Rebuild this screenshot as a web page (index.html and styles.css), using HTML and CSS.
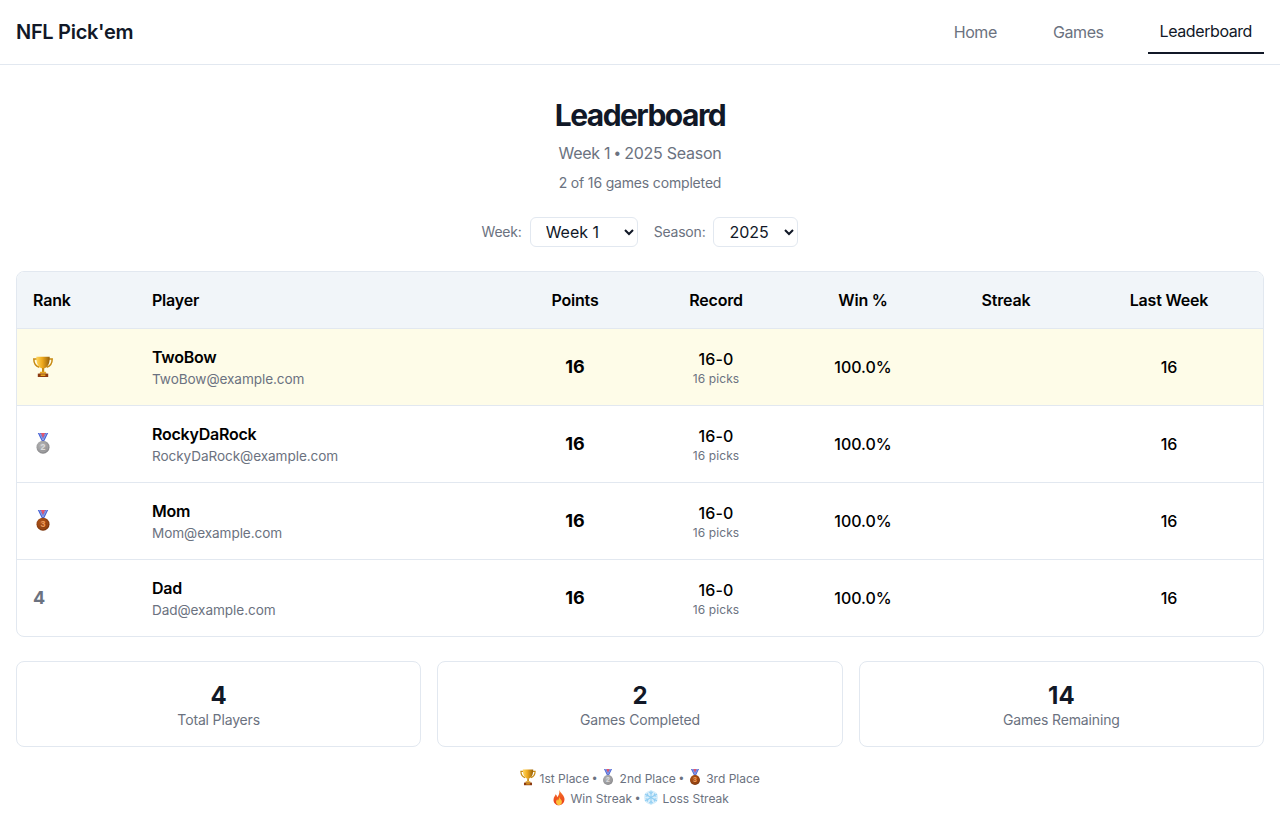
FILE: index.html
```html
<!DOCTYPE html>
<html lang="en">
<head>
<meta charset="utf-8">
<title>NFL Pick'em</title>
<link rel="stylesheet" href="styles.css">
</head>
<body>
<svg class="sprite" aria-hidden="true">
  <defs>
    <linearGradient id="gold" x1="0" x2="1" y1="0" y2="0">
      <stop offset="0" stop-color="#ffd75e"/><stop offset=".45" stop-color="#eea91c"/><stop offset="1" stop-color="#96600a"/>
    </linearGradient>
    <radialGradient id="silver" cx=".4" cy=".35" r=".75">
      <stop offset="0" stop-color="#bdbdbd"/><stop offset="1" stop-color="#7f7f82"/>
    </radialGradient>
    <radialGradient id="bronze" cx=".4" cy=".35" r=".75">
      <stop offset="0" stop-color="#b9591c"/><stop offset="1" stop-color="#73300a"/>
    </radialGradient>
    <linearGradient id="flame" x1="0" x2="0" y1="0" y2="1">
      <stop offset="0" stop-color="#f6792a"/><stop offset="1" stop-color="#e8361a"/>
    </linearGradient>
  </defs>
  <symbol id="i-trophy" viewBox="0 0 20 22">
    <path d="M4 3H.8c0 4.400 2 7.200 5.500 8.200M16 3h3.200c0 4.400-2 7.200-5.500 8.200" fill="none" stroke="#c88a12" stroke-width="1.500"/>
    <path d="M3.300 .8h13.400c0 5.600-1 9.800-5.100 11.400H8.400C4.300 10.600 3.300 6.400 3.300 .8z" fill="url(#gold)"/>
    <rect x="9" y="12" width="2.200" height="4" fill="#c88a12"/>
    <path d="M7.200 15.800h5.600l.7 2H6.500z" fill="#e5a51f"/>
    <rect x="4.800" y="17.600" width="10.400" height="3.400" fill="#8c3a10"/>
    <rect x="7.600" y="18.400" width="4.800" height="1.600" fill="#e5a51f"/>
  </symbol>
  <symbol id="i-ribbon" viewBox="0 0 20 22">
    <path d="M7.800 1h4.400L10 7z" fill="#e2566c"/>
    <path d="M4.800 1h3L11 8.600l-2 1z" fill="#4560d4"/>
    <path d="M15.200 1h-3L9 8.600l2 1z" fill="#4560d4"/>
    <path d="M6.500 1l3.500 7M13.500 1L10 8" stroke="#eef0fb" stroke-width=".5"/>
  </symbol>
  <symbol id="i-fire" viewBox="0 0 20 22">
    <path d="M10.500 1c.8 4 5.600 6.400 6.500 11 .8 5.200-3 9-7 9s-7.800-3.200-7-8.200c.4-2.500 2-3.600 2.600-6 1.300 1 1.900 2.400 1.900 4C9.500 9.300 11 5.200 10.500 1z" fill="url(#flame)"/>
    <path d="M10.200 10c.4 2.400 3.600 3.700 3.600 6.600 0 2.600-1.800 4.400-3.800 4.400s-3.800-1.700-3.800-4.200c0-1.400.8-2.300 1.400-3.400.6.5.9 1.100 1 1.900.8-1.300 1.500-3.300 1.600-5.300z" fill="#fdc13a"/>
  </symbol>
  <symbol id="i-snow" viewBox="0 0 20 22">
    <circle cx="10" cy="11" r="9" fill="#d8eefb"/>
    <g fill="none" stroke="#8fcdf2" stroke-width="1.300">
      <path d="M10 2v18M2.200 6.500l15.600 9M2.200 15.500l15.600-9"/>
      <path d="M7.800 3.600L10 5.800l2.200-2.200M7.800 18.400L10 16.200l2.200 2.200M3 9.400l3-.8-.8-3M17 12.600l-3 .8.800 3M3 12.600l3 .8-.8 3M17 9.400l-3-.8.800-3"/>
    </g>
  </symbol>
</svg>
<nav class="topbar">
  <div class="brand">NFL Pick'em</div>
  <div class="nav-links">
    <a class="nav-link">Home</a>
    <a class="nav-link">Games</a>
    <a class="nav-link active">Leaderboard</a>
  </div>
</nav>
<main class="page">
  <header class="head">
    <h1 class="title">Leaderboard</h1>
    <p class="subtitle">Week 1 <span class="sep">•</span> 2025 Season</p>
    <p class="progress">2 of 16 games completed</p>
  </header>
  <div class="filters">
    <label class="filter-label">Week:</label>
    <select class="select select-week"><option>Week 1</option></select>
    <label class="filter-label season-label">Season:</label>
    <select class="select select-season"><option>2025</option></select>
  </div>
  <div class="table-card">
    <table class="board">
      <colgroup>
        <col class="c-rank"><col class="c-player"><col class="c-points"><col class="c-record"><col class="c-win"><col class="c-streak"><col class="c-last">
      </colgroup>
      <thead>
        <tr><th class="left">Rank</th><th class="left">Player</th><th>Points</th><th>Record</th><th>Win %</th><th>Streak</th><th>Last Week</th></tr>
      </thead>
      <tbody>
        <tr class="first">
          <td class="rank"><svg class="rank-icon"><use href="#i-trophy"/></svg></td>
          <td class="player"><div class="name">TwoBow</div><div class="email">TwoBow@example.com</div></td>
          <td class="points">16</td>
          <td class="record"><div class="rec">16-0</div><div class="picks">16 picks</div></td>
          <td class="num">100.0%</td><td class="num"></td><td class="num">16</td>
        </tr>
        <tr>
          <td class="rank">
            <svg class="rank-icon" viewBox="0 1 20 22"><use href="#i-ribbon" width="20" height="22"/><circle cx="10" cy="15.200" r="6.500" fill="url(#silver)"/><circle cx="10" cy="15.200" r="4.600" class="ring-silver"/><text x="10" y="18.400" class="medal-digit silver-digit">2</text></svg>
          </td>
          <td class="player"><div class="name">RockyDaRock</div><div class="email">RockyDaRock@example.com</div></td>
          <td class="points">16</td>
          <td class="record"><div class="rec">16-0</div><div class="picks">16 picks</div></td>
          <td class="num">100.0%</td><td class="num"></td><td class="num">16</td>
        </tr>
        <tr>
          <td class="rank">
            <svg class="rank-icon" viewBox="0 1 20 22"><use href="#i-ribbon" width="20" height="22"/><circle cx="10" cy="15.200" r="6.500" fill="url(#bronze)"/><circle cx="10" cy="15.200" r="4.600" class="ring-bronze"/><text x="10" y="18.400" class="medal-digit bronze-digit">3</text></svg>
          </td>
          <td class="player"><div class="name">Mom</div><div class="email">Mom@example.com</div></td>
          <td class="points">16</td>
          <td class="record"><div class="rec">16-0</div><div class="picks">16 picks</div></td>
          <td class="num">100.0%</td><td class="num"></td><td class="num">16</td>
        </tr>
        <tr>
          <td class="rank">4</td>
          <td class="player"><div class="name">Dad</div><div class="email">Dad@example.com</div></td>
          <td class="points">16</td>
          <td class="record"><div class="rec">16-0</div><div class="picks">16 picks</div></td>
          <td class="num">100.0%</td><td class="num"></td><td class="num">16</td>
        </tr>
      </tbody>
    </table>
  </div>
  <section class="stats">
    <div class="stat"><div class="stat-value">4</div><div class="stat-label">Total Players</div></div>
    <div class="stat"><div class="stat-value">2</div><div class="stat-label">Games Completed</div></div>
    <div class="stat"><div class="stat-value">14</div><div class="stat-label">Games Remaining</div></div>
  </section>
  <footer class="legend">
    <p><svg class="legend-icon"><use href="#i-trophy"/></svg> 1st Place <span class="sep">•</span> <svg class="legend-icon" viewBox="0 1 20 22"><use href="#i-ribbon" width="20" height="22"/><circle cx="10" cy="15.200" r="6.500" fill="url(#silver)"/><circle cx="10" cy="15.200" r="4.600" class="ring-silver"/><text x="10" y="18.400" class="medal-digit silver-digit">2</text></svg> 2nd Place <span class="sep">•</span> <svg class="legend-icon" viewBox="0 1 20 22"><use href="#i-ribbon" width="20" height="22"/><circle cx="10" cy="15.200" r="6.500" fill="url(#bronze)"/><circle cx="10" cy="15.200" r="4.600" class="ring-bronze"/><text x="10" y="18.400" class="medal-digit bronze-digit">3</text></svg> 3rd Place</p>
    <p><svg class="legend-icon"><use href="#i-fire"/></svg> Win Streak <span class="sep">•</span> <svg class="legend-icon"><use href="#i-snow"/></svg> Loss Streak</p>
  </footer>
</main>
</body>
</html>
```
FILE: styles.css
```css
* { box-sizing: border-box; }
html, body { margin: 0; padding: 0; }
body {
  background: #fff;
  color: #111827;
  font-family: Inter, "Noto Sans", sans-serif;
  font-size: 16px;
  line-height: 24px;
}
.sprite { display: block; width: 0; height: 0; }
.sep { font-family: "Liberation Sans", sans-serif; line-height: 0; }
.medal-digit {
  font-family: "Liberation Sans", sans-serif;
  font-size: 9px;
  font-weight: 700;
  text-anchor: middle;
}
.silver-digit { fill: #dcdcdc; }
.bronze-digit { fill: #ee9a58; }
.ring-silver { fill: none; stroke: #a3a3a5; stroke-width: .8; }
.ring-bronze { fill: none; stroke: #a14c16; stroke-width: .8; }
.topbar {
  height: 65px;
  display: flex;
  align-items: center;
  justify-content: space-between;
  padding: 0 16px;
  border-bottom: 1px solid #e2e8f0;
}
.brand { font-size: 20px; font-weight: 600; line-height: 28px; letter-spacing: -0.3px; }
.nav-links { display: flex; gap: 32px; height: 44px; }
.nav-link {
  padding: 0 12px;
  color: #6b7280;
  font-size: 16px;
  line-height: 44px;
  letter-spacing: -0.4px;
}
.nav-link.active {
  color: #111827;
  border-bottom: 2px solid #111827;
  line-height: 42px;
  letter-spacing: -0.42px;
}
.page { padding: 32px 16px 0; }
.head { text-align: center; }
.title { margin: 0; font-size: 30px; line-height: 36px; font-weight: 700; letter-spacing: -1.55px; }
.subtitle { margin: 8px 0 0; color: #6b7280; line-height: 24px; letter-spacing: -0.25px; }
.progress { margin: 8px 0 0; color: #6b7280; font-size: 14px; line-height: 20px; letter-spacing: -0.17px; }
.filters {
  margin-top: 24px;
  display: flex;
  justify-content: center;
  align-items: center;
  height: 30px;
}
.filter-label { color: #6b7280; font-size: 14px; line-height: 20px; margin-right: 8px; letter-spacing: -0.2px; }
.season-label { margin-left: 16px; }
.select {
  height: 30px;
  background: #fff;
  color: #111827;
  border: 1px solid #e2e8f0;
  border-radius: 6px;
  font-family: inherit;
  font-size: 16px;
  padding: 0 8px 0 11px;
}
.select-week { width: 108px; }
.select-season { width: 85px; }
.table-card {
  margin-top: 24px;
  border: 1px solid #e2e8f0;
  border-radius: 8px;
  overflow: hidden;
}
.board { width: 100%; table-layout: fixed; border-collapse: separate; border-spacing: 0; }
.c-rank { width: 119px; }
.c-player { width: 371px; }
.c-points { width: 136px; }
.c-record { width: 146px; }
.c-win { width: 148px; }
.c-streak { width: 138px; }
.c-last { width: 188px; }
.board th {
  height: 57px;
  background: #f1f5f9;
  color: #000;
  font-weight: 600;
  font-size: 16px;
  text-align: center;
  padding: 0 16px;
  border-bottom: 1px solid #e2e8f0;
  letter-spacing: -0.2px;
}
.board th.left { text-align: left; }
.board td {
  height: 77px;
  padding: 0 16px;
  text-align: center;
  border-bottom: 1px solid #e2e8f0;
  color: #000;
}
.board tbody tr:last-child td { border-bottom: 0; height: 76px; }
.board tr.first td { background: #fefce8; }
.board td.rank { text-align: left; font-size: 18px; font-weight: 700; color: #6b7280; }
.rank-icon { display: block; width: 20px; height: 22px; }
.board td.player { text-align: left; }
.name { font-weight: 600; line-height: 24px; letter-spacing: -0.25px; }
.email { color: #6b7280; font-size: 13.6px; line-height: 20px; letter-spacing: -0.08px; }
.board td.points { font-size: 18px; font-weight: 700; }
.rec { line-height: 24px; font-weight: 500; letter-spacing: 0.1px; }
.picks { color: #6b7280; font-size: 12px; line-height: 16px; letter-spacing: 0.1px; }
.board td.num { font-weight: 500; }
.stats {
  margin-top: 24px;
  display: grid;
  grid-template-columns: repeat(3, 1fr);
  gap: 16px;
}
.stat {
  height: 86px;
  border: 1px solid #e2e8f0;
  border-radius: 8px;
  text-align: center;
  padding-top: 18px;
}
.stat-value { font-size: 24px; line-height: 32px; font-weight: 700; }
.stat-label { color: #6b7280; font-size: 14px; line-height: 16px; letter-spacing: -0.15px; }
.legend { margin-top: 22px; text-align: center; color: #6b7280; font-size: 12px; line-height: 20px; }
.legend p { margin: 0; }
.legend-icon { width: 16px; height: 17px; vertical-align: -3px; }
```
